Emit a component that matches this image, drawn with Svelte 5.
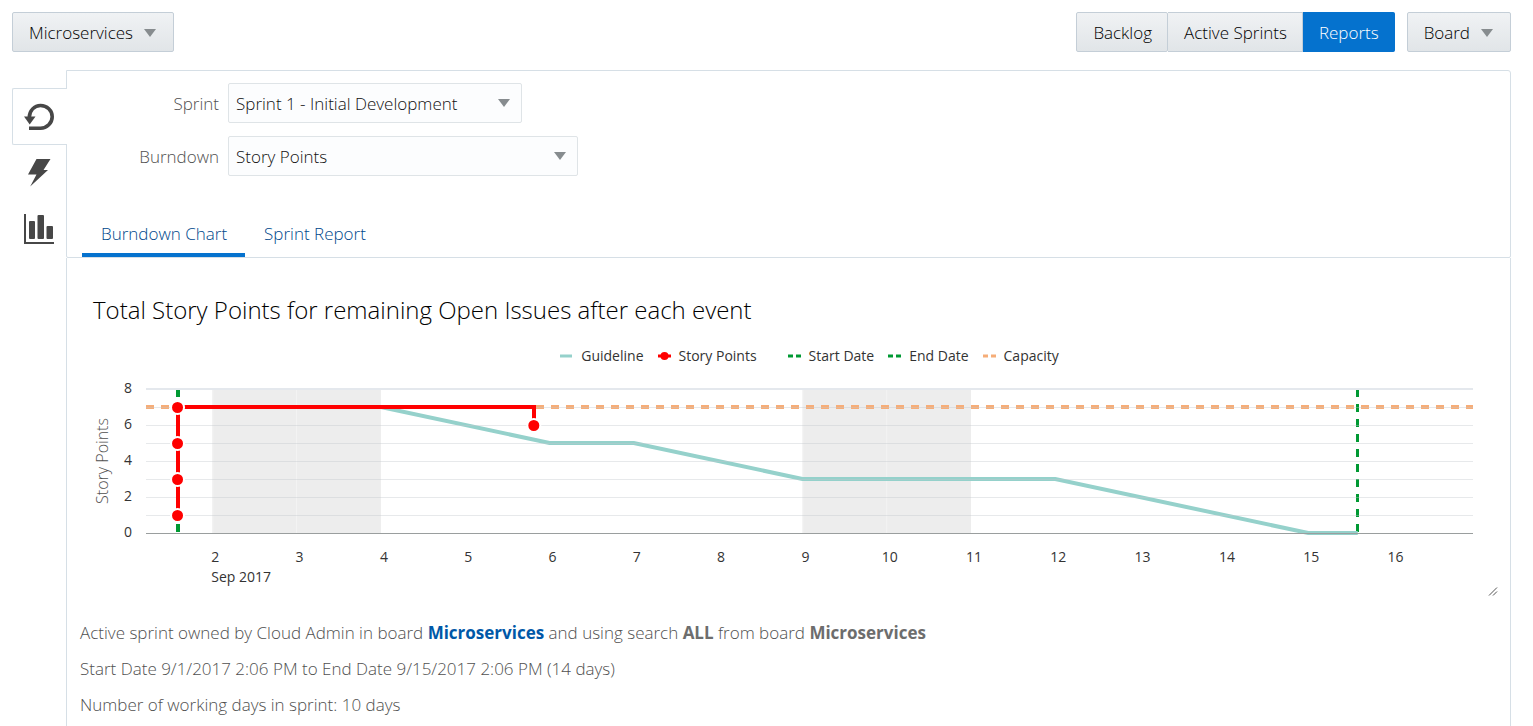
<script>
  const dayStart = 1.2135;
  const dayEnd = 16.955;
  const margin = { left: 64, right: 25 };
  const plotTop = 14;
  const plotHeight = 144;

  let chartWidth = $state(1417);

  const plotRight = $derived(chartWidth - margin.right);
  const x = $derived(
    (day) => margin.left + ((day - dayStart) / (dayEnd - dayStart)) * (plotRight - margin.left)
  );
  const y = (points) => plotTop + plotHeight - (points / 8) * plotHeight;

  const line = $derived((pts) => pts.map(([d, p]) => `${x(d)},${y(p)}`).join(' '));

  const sprintStart = 1.5875;
  const sprintEnd = 15.5875;
  const guideline = [[sprintStart, 7], [4, 7], [6, 5], [7, 5], [9, 3], [12, 3], [15, 0], [sprintEnd, 0]];
  const burndown = [[sprintStart, 1], [sprintStart, 7], [5.814, 7], [5.814, 6]];
  const events = [[sprintStart, 1], [sprintStart, 3], [sprintStart, 5], [sprintStart, 7], [5.814, 6]];
  const weekends = [2, 9];
  const days = Array.from({ length: 15 }, (_, i) => i + 2);

  let activeTab = $state('chart');
  let view = $state('reports');
</script>

<div class="page">
  <header>
    <button class="btn menu">Microservices <span class="caret"></span></button>
    <div class="right">
      <nav class="group" aria-label="Views">
        <button class="btn" class:selected={view === 'backlog'} onclick={() => (view = 'backlog')}>Backlog</button>
        <button class="btn" class:selected={view === 'sprints'} onclick={() => (view = 'sprints')}>Active Sprints</button>
        <button class="btn" class:selected={view === 'reports'} onclick={() => (view = 'reports')}>Reports</button>
      </nav>
      <button class="btn menu">Board <span class="caret"></span></button>
    </div>
  </header>

  <div class="body">
    <nav class="side" aria-label="Reports">
      <button class="active" aria-label="Burndown">
        <svg width="32" height="32" viewBox="0 0 32 32">
          <path d="M6.300 16.500C6.300 9.500 11.500 4.500 17.500 4.500C24 4.500 29.200 9.500 29.200 15.700C29.200 22 24 27.200 17.500 27.200H6" fill="none" stroke="#474747" stroke-width="3.600" />
          <path d="M1 15.500H12.500L6.700 23.500Z" fill="#474747" />
        </svg>
      </button>
      <button aria-label="Velocity">
        <svg width="32" height="32" viewBox="0 0 32 32">
          <path d="M13.500 2H27.500L20.500 13H25L7.200 29.500L13.500 17.500H5Z" fill="#474747" />
        </svg>
      </button>
      <button aria-label="Charts">
        <svg width="32" height="32" viewBox="0 0 32 32" fill="#474747">
          <path d="M1 1H3V29H31V31H1Z" />
          <rect x="6" y="8" width="6" height="18" rx="1" />
          <rect x="14.500" y="2" width="6.500" height="24" rx="1" />
          <rect x="23.500" y="13" width="6.500" height="13" rx="1" />
        </svg>
      </button>
    </nav>

    <main>
      <section class="top">
        <div class="form">
          <label for="sprint">Sprint</label>
          <div class="select short">
            <select id="sprint"><option>Sprint 1 - Initial Development</option></select>
            <span class="caret"></span>
          </div>
          <label for="burndown">Burndown</label>
          <div class="select">
            <select id="burndown"><option>Story Points</option></select>
            <span class="caret"></span>
          </div>
        </div>
        <div class="tabs" role="tablist">
          <button role="tab" aria-selected={activeTab === 'chart'} onclick={() => (activeTab = 'chart')}>Burndown Chart</button>
          <button role="tab" aria-selected={activeTab === 'report'} onclick={() => (activeTab = 'report')}>Sprint Report</button>
        </div>
      </section>

      <section class="report">
        <h1>Total Story Points for remaining Open Issues after each event</h1>

        <ul class="legend">
          <li><svg width="13" height="8"><path d="M0 4H12" stroke="#95d1cb" stroke-width="3" /></svg>Guideline</li>
          <li><svg width="13" height="8"><path d="M0 4H13" stroke="#f00" stroke-width="3" /><circle cx="6.500" cy="4" r="4" fill="#f00" /></svg>Story Points</li>
          <li class="markers"><svg width="13" height="8"><path d="M0 4H13" stroke="#093" stroke-width="3" stroke-dasharray="5 3" /></svg>Start Date</li>
          <li><svg width="13" height="8"><path d="M0 4H13" stroke="#093" stroke-width="3" stroke-dasharray="5 3" /></svg>End Date</li>
          <li><svg width="13" height="8"><path d="M0 4H13" stroke="#f6ad78" stroke-width="3" stroke-dasharray="5 3" /></svg>Capacity</li>
        </ul>

        <div class="chart" bind:clientWidth={chartWidth}>
          <svg width={chartWidth} height="223" role="img" aria-label="Burndown chart">
            {#each weekends as d}
              <rect x={x(d)} y={plotTop} width={x(d + 2) - x(d)} height={plotHeight} fill="#ededed" />
              <path d="M{x(d) + 0.5} {plotTop}V{plotTop + plotHeight}M{x(d + 1)} {plotTop}V{plotTop + plotHeight}" stroke="#f3f3f3" />
            {/each}

            <path d="M{margin.left} {y(7)}H{plotRight}" stroke="#f6ad78" stroke-width="4" stroke-dasharray="8 7" />
            <path class="crisp" d="M{x(sprintStart)} {plotTop}V{y(0)}" stroke="#093" stroke-width="4" stroke-dasharray="8 7" />
            <path class="crisp" d="M{x(sprintEnd)} {plotTop}V{y(0)}" stroke="#093" stroke-width="3" stroke-dasharray="8 7" />
            <polyline points={line(guideline)} class="guideline" />

            {#each [1, 2, 3, 4, 5, 6, 7] as p}
              <path d="M{margin.left} {y(p) + 0.5}H{plotRight}" stroke="#c4c8cc" stroke-opacity="0.4" />
            {/each}
            <path d="M{margin.left} {plotTop}H{plotRight}" stroke="#e4e8ed" stroke-width="2" />
            <path d="M{margin.left} {y(0) + 0.5}H{plotRight}" stroke="#9a9e9e" />

            <polyline points={line(burndown)} class="burndown crisp" />
            {#each events as [d, p]}
              <circle cx={x(d)} cy={y(p) + 0.5} r="6.500" fill="#f00" stroke="#fff" stroke-width="2" />
            {/each}

            {#each [0, 2, 4, 6, 8] as p}
              <text x="46" y={y(p) + 4} text-anchor="middle">{p}</text>
            {/each}
            {#each days as d}
              <text x={x(d) + 3} y="187" text-anchor="middle">{d}</text>
            {/each}
            <text x={x(2) - 1} y="207">Sep 2017</text>
            <text class="axis" transform="translate(26 86) rotate(-90)" text-anchor="middle">Story Points</text>
            <path d="M{chartWidth - 9} 220.500l8-8m-4 8l4-4" stroke="#555" fill="none" />
          </svg>
        </div>

        <div class="summary">
          <p>Active sprint owned by Cloud Admin in board <a href="#microservices">Microservices</a> and using search <b>ALL</b> from board <b>Microservices</b></p>
          <p>Start Date 9/1/2017 2:06 PM to End Date 9/15/2017 2:06 PM (14 days)</p>
          <p>Number of working days in sprint: 10 days</p>
        </div>
      </section>
    </main>
  </div>
</div>

<style>
  :global(body) {
    margin: 0;
    background: #fff;
  }
  .page {
    box-sizing: border-box;
    min-height: 100vh;
    padding: 12px 22px 0 12px;
    display: flex;
    flex-direction: column;
    gap: 18px;
    font: 300 17px/24px "Open Sans", "Noto Sans", sans-serif;
    color: #111;
  }
  button,
  select {
    font: inherit;
    margin: 0;
    cursor: pointer;
  }
  header,
  .right {
    display: flex;
    justify-content: space-between;
    gap: 12px;
  }
  .group {
    display: flex;
  }
  .btn {
    height: 40px;
    padding: 2px 15px 0 16px;
    display: flex;
    align-items: center;
    border: 1px solid #c4ced7;
    border-radius: 2px;
    background: linear-gradient(#f0f2f4, #e1e5e8);
    color: #000;
    white-space: nowrap;
  }
  .btn.menu {
    gap: 11px;
    padding-right: 17px;
  }
  .group .btn + .btn {
    border-left: 0;
    border-radius: 0;
  }
  .group .btn.selected {
    background: #0572ce;
    border-color: #0572ce;
    color: #fff;
    border-radius: 0 2px 2px 0;
  }
  .caret {
    width: 0;
    border: 6px solid transparent;
    border-top: 8px solid #878c8f;
    border-bottom: 0;
  }
  .body {
    flex: 1;
    display: flex;
  }
  .side {
    flex: 0 0 54px;
    padding-top: 18px;
    position: relative;
    z-index: 1;
  }
  .side button {
    box-sizing: border-box;
    width: 54px;
    height: 56px;
    padding: 0;
    border: 0;
    background: none;
    display: grid;
    place-items: center;
  }
  .side button.active {
    width: 55px;
    height: 57px;
    padding-right: 2px;
    border: 1px solid #d6dfe6;
    border-right: 0;
    border-radius: 2px 0 0 2px;
    background: #fff;
  }
  main {
    flex: 1;
    min-width: 0;
    margin-left: -1px;
    display: flex;
    flex-direction: column;
  }
  .top {
    border: 1px solid #d6dfe6;
    border-radius: 0 3px 2px 2px;
    padding: 12px 15px 0;
  }
  .form {
    display: grid;
    grid-template-columns: 137px minmax(0, 350px);
    gap: 13px 9px;
    align-items: center;
  }
  label {
    text-align: right;
    padding-top: 2px;
    color: #505050;
  }
  .select {
    display: grid;
    grid-template-columns: minmax(0, 1fr) 24px;
    align-items: center;
  }
  .select.short {
    width: 294px;
  }
  .select select {
    grid-area: 1 / 1 / 2 / 3;
    height: 40px;
    padding: 2px 24px 0 7px;
    appearance: none;
    border: 1px solid #dfe4e7;
    border-radius: 2px;
    background: #fcfdfe;
    color: #111;
  }
  .select .caret {
    grid-area: 1 / 2;
    pointer-events: none;
  }
  .tabs {
    display: flex;
    margin-top: 34px;
  }
  .tabs button {
    height: 47px;
    padding: 4px 18px 0 19px;
    border: 0;
    border-bottom: 4px solid transparent;
    background: none;
    color: #00488c;
  }
  .tabs button[aria-selected="true"] {
    border-bottom-color: #0572ce;
  }
  .report {
    flex: 1;
    border: solid #d6dfe6;
    border-width: 0 1px;
    padding: 36px 12px 0 15px;
  }
  h1 {
    margin: 0 11px;
    font-size: 24px;
    line-height: 32px;
    font-weight: 300;
    color: #000;
  }
  .legend {
    list-style: none;
    margin: 20px 25px 0 64px;
    padding: 0;
    display: flex;
    flex-wrap: wrap;
    justify-content: center;
    gap: 0 14px;
    font-size: 14px;
    font-weight: 400;
    line-height: 20px;
    color: #333;
  }
  .legend li {
    display: flex;
    align-items: center;
    gap: 8px;
  }
  .legend .markers {
    margin-left: 17px;
  }
  .chart {
    margin-top: 9px;
    overflow: hidden;
  }
  svg {
    display: block;
  }
  .chart text {
    font-size: 14px;
    font-weight: 400;
    fill: #333;
  }
  .chart .axis {
    font-size: 16px;
    font-weight: 300;
    fill: #505050;
  }
  .guideline,
  .burndown {
    fill: none;
    stroke-width: 4;
    stroke: #95d1cb;
  }
  .burndown {
    stroke: #f00;
  }
  .crisp {
    shape-rendering: crispEdges;
  }
  .summary {
    margin: 23px 0 0 -2px;
    color: #505050;
  }
  .summary p {
    margin: 0 0 12px;
  }
  .summary p:last-child {
    margin: 0;
  }
  b,
  a {
    color: #6d6d6d;
    font-weight: 700;
    text-decoration: none;
  }
  a {
    color: #0058a8;
  }
</style>
